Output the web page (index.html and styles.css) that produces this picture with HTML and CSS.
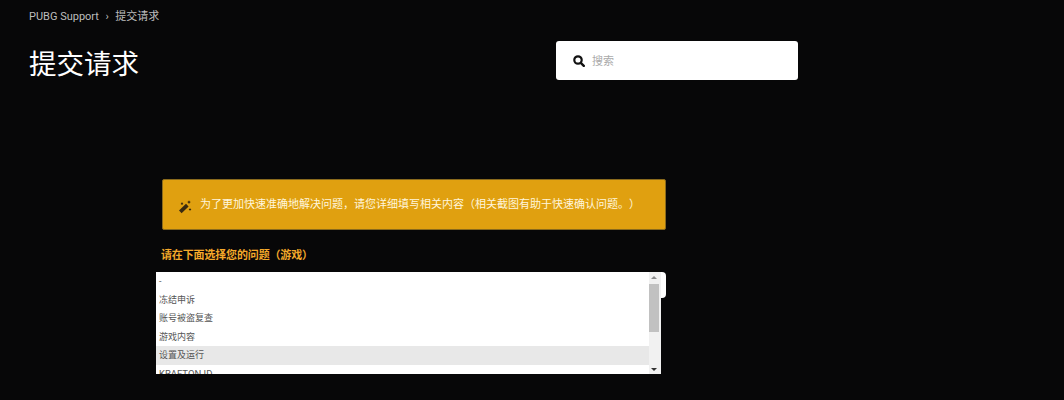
FILE: index.html
```html
<!DOCTYPE html>
<html lang="zh">
<head>
<meta charset="utf-8">
<title>提交请求</title>
<link rel="stylesheet" href="styles.css">
</head>
<body>
<header class="top">
  <div class="heading">
    <nav class="crumbs"><a>PUBG Support</a><span class="sep">›</span><a>提交请求</a></nav>
    <h1>提交请求</h1>
  </div>
  <div class="search">
    <svg class="search-icon" viewBox="0 0 12 12" width="12" height="12"><circle cx="5" cy="5" r="3.7" fill="none" stroke="#111" stroke-width="2.2"/><path d="M7.8 7.8 10.8 10.8" stroke="#111" stroke-width="2.4" stroke-linecap="round"/></svg>
    <span class="placeholder">搜索</span>
  </div>
</header>
<main class="form">
  <div class="notice">
    <svg class="wand" viewBox="0 0 14 14" width="14" height="14"><path d="M1 10.6 8 3.8 10.6 6.4 3.6 13.2Z" fill="#3a2a10"/><path d="M11 .8v2.6M9.7 2.1h2.6M4 2.6v2.2M2.9 3.7h2.2M12 8.4v2.2M10.9 9.5h2.2" stroke="#3a2a10" stroke-width="1.1"/></svg>
    <p>为了更加快速准确地解决问题，请您详细填写相关内容（相关截图有助于快速确认问题。）</p>
  </div>
  <label class="field-label">请在下面选择您的问题（游戏）</label>
  <div class="select">
    <div class="dropdown">
      <ul class="options">
        <li>-</li>
        <li>冻结申诉</li>
        <li>账号被盗复查</li>
        <li>游戏内容</li>
        <li class="active">设置及运行</li>
        <li class="latin">KRAFTON ID</li>
      </ul>
      <div class="scrollbar">
        <span class="arrow up"></span>
        <span class="thumb"></span>
        <span class="arrow down"></span>
      </div>
    </div>
  </div>
</main>
</body>
</html>
```
FILE: styles.css
```css
* { box-sizing: border-box; }
html, body { height: 100%; }
body {
  margin: 0;
  height: 400px;
  overflow: hidden;
  background: #070708;
  font-family: Roboto, "Noto Sans CJK SC", sans-serif;
  color: #fff;
  text-spacing-trim: space-all;
}
.top {
  display: flex;
  align-items: flex-start;
  padding: 10px 0 0 29px;
  height: 179px;
}
.heading { width: 527px; }
.crumbs {
  display: flex;
  align-items: center;
  font-size: 11px;
  line-height: 14px;
  color: #bdbdbd;
}
.sep { margin: 0 6.5px; }
h1 {
  margin: 19px 0 0;
  font-size: 27.5px;
  line-height: 44px;
  font-weight: 400;
}
.search {
  display: flex;
  align-items: center;
  width: 242px;
  height: 39px;
  margin-top: 31px;
  padding-left: 17px;
  background: #fff;
  border-radius: 3px;
}
.search-icon { margin-right: 7px; }
.placeholder { font-size: 11px; color: #aaa; margin-top: -2px; }
.form {
  width: 504px;
  margin-left: 162px;
}
.notice {
  display: flex;
  align-items: center;
  height: 51px;
  padding-left: 15px;
  background: #e0a010;
  border: 1px solid #8a6a1c;
  border-radius: 2px;
}
.wand { margin-right: 8px; margin-top: 4px; }
.notice p {
  margin: 0;
  font-size: 11px;
  line-height: 16px;
  color: #fff6dc;
}
.field-label {
  display: block;
  margin: 16px 0 10px -1px;
  font-size: 11px;
  line-height: 16px;
  letter-spacing: -0.15px;
  font-weight: 700;
  color: #f4a92a;
  font-family: "Noto Sans CJK SC", sans-serif;
}
.select {
  position: relative;
  height: 26px;
  background: #fff;
  border-radius: 0 4px 4px 0;
}
.dropdown {
  position: absolute;
  left: -6px;
  top: 0;
  display: flex;
  width: 505px;
  height: 102px;
  overflow: hidden;
  background: #fff;
}
.options {
  flex: 1;
  margin: 0;
  padding: 0;
  list-style: none;
  font-size: 9px;
  color: #555;
}
.options li {
  height: 18.5px;
  line-height: 18.5px;
  padding-left: 3px;
}
.options li.active { background: #e8e8e8; }
.options li.latin { font-size: 9.5px; }
.scrollbar {
  display: flex;
  flex-direction: column;
  align-items: center;
  width: 12px;
  padding-right: 2px;
  background: #f1f1f1;
}
.thumb {
  width: 10px;
  height: 48px;
  margin-top: 5px;
  background: #c1c1c1;
}
.arrow {
  width: 0;
  height: 0;
  margin-top: 4px;
  border-left: 3px solid transparent;
  border-right: 3px solid transparent;
}
.arrow.up { border-bottom: 3px solid #8a8a8a; }
.arrow.down { margin-top: auto; margin-bottom: 3px; border-top: 3px solid #333; }
```
